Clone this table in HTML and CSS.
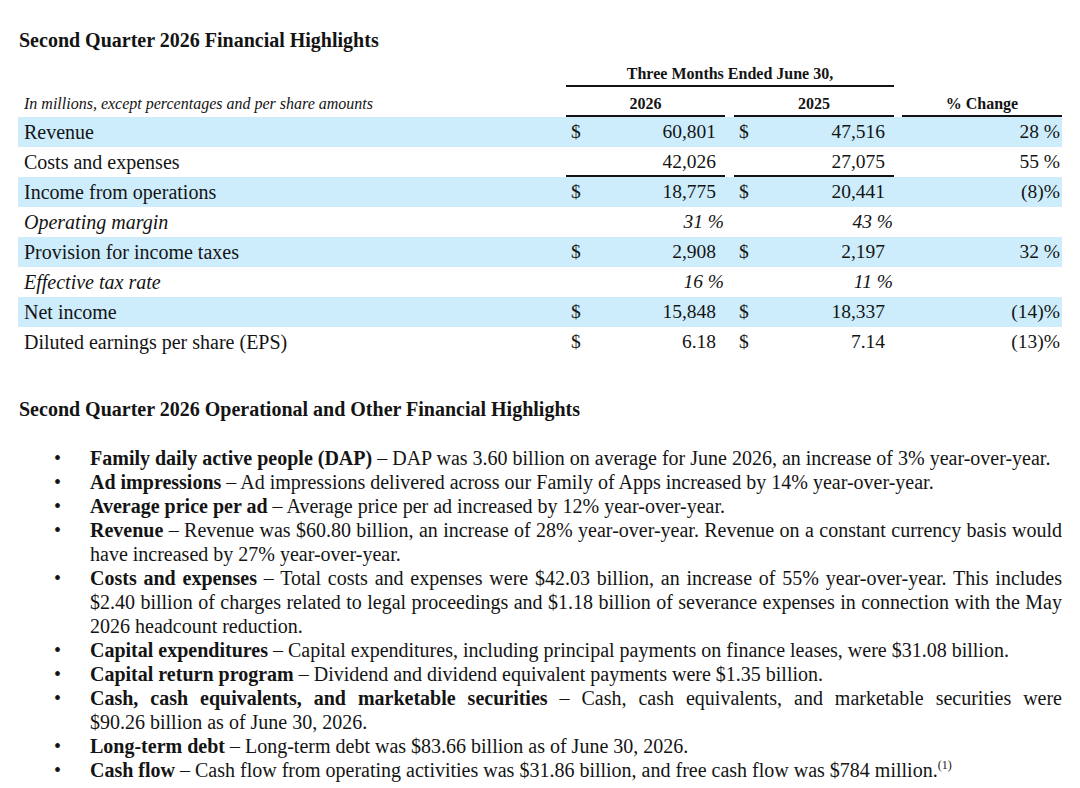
FILE: index.html
```html
<!DOCTYPE html>
<html>
	<head>
		<meta charset="utf-8">
		<link rel="stylesheet" href="styles.css">
	</head>
	<body>
		<div class="page">
			<h1 class="title">Second Quarter 2026 Financial Highlights</h1>

			<table class="fin">
				<colgroup>
					<col class="cLabel">
					<col class="cCur">
					<col class="cNum">
					<col class="cGap">
					<col class="cCur">
					<col class="cNum2">
					<col class="cGap2">
					<col class="cPct">
				</colgroup>
				<tr class="headTop">
					<td></td>
					<td colspan="5" class="period rule">Three Months Ended June 30,</td>
					<td></td>
					<td></td>
				</tr>
				<tr class="headYears">
					<td class="note">In millions, except percentages and per share amounts</td>
					<td colspan="2" class="year rule">2026</td>
					<td></td>
					<td colspan="2" class="year rule">2025</td>
					<td></td>
					<td class="year rule">% Change</td>
				</tr>
				<tr class="shade">
					<td class="label">Revenue</td>
					<td class="cur">$</td><td class="num">60,801</td><td></td>
					<td class="cur">$</td><td class="num">47,516</td><td></td>
					<td class="pct">28 %</td>
				</tr>
				<tr>
					<td class="label">Costs and expenses</td>
					<td class="cur rule"></td><td class="num rule">42,026</td><td></td>
					<td class="cur rule"></td><td class="num rule">27,075</td><td></td>
					<td class="pct">55 %</td>
				</tr>
				<tr class="shade">
					<td class="label">Income from operations</td>
					<td class="cur">$</td><td class="num">18,775</td><td></td>
					<td class="cur">$</td><td class="num">20,441</td><td></td>
					<td class="pct">(8)%</td>
				</tr>
				<tr class="ratio">
					<td class="label">Operating margin</td>
					<td class="cur"></td><td class="num">31 %</td><td></td>
					<td class="cur"></td><td class="num">43 %</td><td></td>
					<td class="pct"></td>
				</tr>
				<tr class="shade">
					<td class="label">Provision for income taxes</td>
					<td class="cur">$</td><td class="num">2,908</td><td></td>
					<td class="cur">$</td><td class="num">2,197</td><td></td>
					<td class="pct">32 %</td>
				</tr>
				<tr class="ratio">
					<td class="label">Effective tax rate</td>
					<td class="cur"></td><td class="num">16 %</td><td></td>
					<td class="cur"></td><td class="num">11 %</td><td></td>
					<td class="pct"></td>
				</tr>
				<tr class="shade">
					<td class="label">Net income</td>
					<td class="cur">$</td><td class="num">15,848</td><td></td>
					<td class="cur">$</td><td class="num">18,337</td><td></td>
					<td class="pct">(14)%</td>
				</tr>
				<tr>
					<td class="label">Diluted earnings per share (EPS)</td>
					<td class="cur">$</td><td class="num">6.18</td><td></td>
					<td class="cur">$</td><td class="num">7.14</td><td></td>
					<td class="pct">(13)%</td>
				</tr>
			</table>

			<h2 class="title sub">Second Quarter 2026 Operational and Other Financial Highlights</h2>

			<ul class="points">
				<li><span class="dot">•</span><p><b>Family daily active people (DAP)</b> – DAP was 3.60 billion on average for June 2026, an increase of 3% year-over-year.</p></li>
				<li><span class="dot">•</span><p><b>Ad impressions</b> – Ad impressions delivered across our Family of Apps increased by 14% year-over-year.</p></li>
				<li><span class="dot">•</span><p><b>Average price per ad</b> – Average price per ad increased by 12% year-over-year.</p></li>
				<li><span class="dot">•</span><p><b>Revenue</b> – Revenue was $60.80 billion, an increase of 28% year-over-year. Revenue on a constant currency basis would have increased by 27% year-over-year.</p></li>
				<li><span class="dot">•</span><p><b>Costs and expenses</b> – Total costs and expenses were $42.03 billion, an increase of 55% year-over-year. This includes $2.40 billion of charges related to legal proceedings and $1.18 billion of severance expenses in connection with the May 2026 headcount reduction.</p></li>
				<li><span class="dot">•</span><p><b>Capital expenditures</b> – Capital expenditures, including principal payments on finance leases, were $31.08 billion.</p></li>
				<li><span class="dot">•</span><p><b>Capital return program</b> – Dividend and dividend equivalent payments were $1.35 billion.</p></li>
				<li><span class="dot">•</span><p><span class="spread"><b>Cash, cash equivalents, and marketable securities</b> – Cash, cash equivalents, and marketable securities were</span> $90.26 billion as of June 30, 2026.</p></li>
				<li><span class="dot">•</span><p><b>Long-term debt</b> – Long-term debt was $83.66 billion as of June 30, 2026.</p></li>
				<li><span class="dot">•</span><p><b>Cash flow</b> – Cash flow from operating activities was $31.86 billion, and free cash flow was $784 million.<sup>(1)</sup></p></li>
			</ul>
		</div>
	</body>
</html>
```

FILE: styles.css
```css
body{
	margin:0px;
	background-color: #ffffff;
	color: #141414;
	font-family: "Liberation Serif", "Times New Roman", serif;
}
.page{
	padding:28px 18px 0px 19px;
}
.title{
	margin:0px;
	font-size:20px;
	line-height:24px;
	font-weight:bold;
}
.sub{
	margin-top:40px;
}

/* table */
.fin{
	margin:12px 0px 0px -1px;
	border-collapse: collapse;
	border-spacing:0px;
	table-layout: fixed;
	width:1044px;
	font-size:20px;
}
.fin td{
	padding:0px;
	line-height:20px;
	height:30px;
	white-space: nowrap;
}
.cLabel{ width:548px; }
.cCur{ width:24px; }
.cNum{ width:135px; }
.cGap{ width:9px; }
.cNum2{ width:136px; }
.cGap2{ width:8px; }
.cPct{ width:160px; }

.fin .headTop td{
	height:20px;
	vertical-align: bottom;
	padding-bottom:3px;
}
.fin .headYears td{
	height:27px;
	vertical-align: bottom;
	padding-bottom:3px;
}
.period, .year{
	text-align:center;
	font-weight:bold;
	font-size:16px;
}
.note{
	font-style: italic;
	font-size:16px;
	padding-left:6px !important;
}
.rule{
	box-shadow: inset 0px -2px 0px #141414;
}
.shade{
	background-color: #cdedfc;
}
.label{
	padding-left:6px !important;
}
.ratio .label, .ratio .num{
	font-style: italic;
}
.cur{
	padding-left:5px !important;
	font-size:19.5px;
}
.num{
	text-align:right;
	font-size:19.5px;
	padding-right:9px !important;
}
.ratio .num{
	padding-right:1px !important;
}
.pct{
	text-align:right;
	font-size:19.5px;
	padding-right:2px !important;
}

/* bullet list */
.points{
	list-style: none;
	margin:25px 0px 0px 0px;
	padding:0px 0px 0px 35px;
	font-size:20px;
	line-height:24px;
}
.points li{
	display:flex;
}
.dot{
	flex:none;
	width:36px;
}
.points p{
	margin:0px;
	flex:1;
	text-align: justify;
}
.spread{
	word-spacing:5px;
}
sup{
	font-size:12px;
	line-height:0px;
	vertical-align: 8px;
}
```
